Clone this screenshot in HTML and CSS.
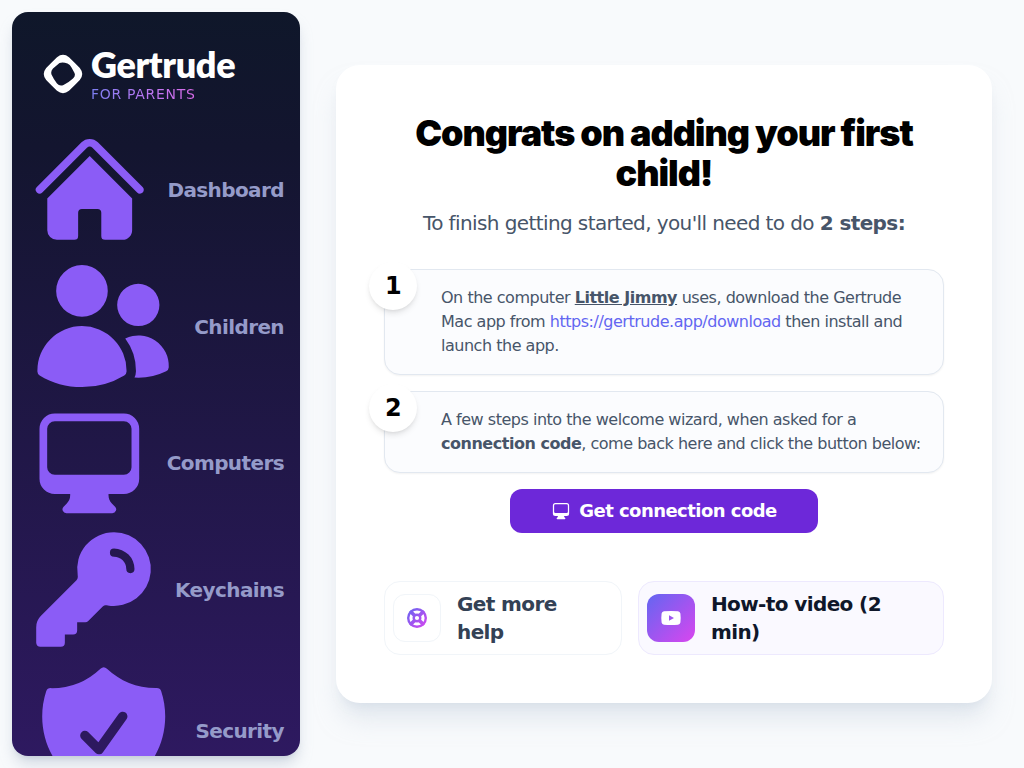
FILE: index.html
```html
<!DOCTYPE html>
<html lang="en">
<head>
<meta charset="utf-8">
<title>Gertrude for Parents</title>
<link rel="stylesheet" href="styles.css">
</head>
<body>
<div class="app">
  <aside class="sidebar">
    <div class="brand">
      <svg class="brand-mark" viewBox="0 0 40 40" aria-hidden="true">
        <path fill="#fff" fill-rule="evenodd" d="M14 3.200Q20 -1.700 26 3.200Q31.500 8.500 36.800 14Q41.700 20 36.800 26Q31.500 31.500 26 36.800Q20 41.700 14 36.800Q8.500 31.500 3.200 26Q-1.700 20 3.200 14Q8.500 8.500 14 3.200ZM16.500 9Q20 8 24.500 9.500Q27 10.500 28.500 13.500L31.500 19Q32.800 22 30 24.500Q25 29 20.500 31Q16.500 32.500 14 29.500Q10.500 25 8.500 20.500Q7.500 17 10 14.500Z"/>
      </svg>
      <div class="brand-text">
        <span class="brand-name">Gertrude</span>
        <span class="brand-tag">FOR PARENTS</span>
      </div>
    </div>
    <nav class="nav">
      <a class="nav-item" href="#"><svg viewBox="0 0 24 24" aria-hidden="true"><path d="M11.47 3.84a.75.75 0 011.06 0l8.69 8.69a.75.75 0 101.06-1.06l-8.689-8.69a2.25 2.25 0 00-3.182 0l-8.69 8.69a.75.75 0 001.061 1.06l8.69-8.69z"/><path d="M12 5.432l8.159 8.159c.03.03.06.058.091.086v6.198c0 1.035-.84 1.875-1.875 1.875H15a.75.75 0 01-.75-.75v-4.5a.75.75 0 00-.75-.75h-3a.75.75 0 00-.75.75V21a.75.75 0 01-.75.75H5.625a1.875 1.875 0 01-1.875-1.875v-6.198a2.29 2.29 0 00.091-.086L12 5.432z"/></svg><span>Dashboard</span></a>
      <a class="nav-item" href="#"><svg viewBox="0 0 24 24" aria-hidden="true"><path d="M4.5 6.375a4.125 4.125 0 118.25 0 4.125 4.125 0 01-8.25 0zM14.25 8.625a3.375 3.375 0 116.75 0 3.375 3.375 0 01-6.75 0zM1.5 19.125a7.125 7.125 0 0114.25 0v.003l-.001.119a.75.75 0 01-.363.63 13.067 13.067 0 01-6.761 1.873c-2.472 0-4.786-.684-6.76-1.873a.75.75 0 01-.364-.63l-.001-.122zM17.25 19.128l-.001.144a2.25 2.25 0 01-.233.96 10.088 10.088 0 005.06-1.01.75.75 0 00.42-.643 4.875 4.875 0 00-6.957-4.611 8.586 8.586 0 011.71 5.157v.003z"/></svg><span>Children</span></a>
      <a class="nav-item" href="#"><svg viewBox="0 0 24 24" aria-hidden="true"><path fill-rule="evenodd" d="M2.25 5.25a3 3 0 013-3h13.5a3 3 0 013 3V15a3 3 0 01-3 3h-3v.257c0 .597.237 1.17.659 1.591l.621.622a.75.75 0 01-.53 1.28h-9a.75.75 0 01-.53-1.28l.621-.622a2.25 2.25 0 00.659-1.59V18h-3a3 3 0 01-3-3V5.25zm1.5 0v7.5a1.5 1.5 0 001.5 1.5h13.5a1.5 1.5 0 001.5-1.5v-7.5a1.5 1.5 0 00-1.500-1.500H5.250a1.500 1.500 0 00-1.500 1.500z"/></svg><span>Computers</span></a>
      <a class="nav-item" href="#"><svg viewBox="0 0 24 24" aria-hidden="true"><path fill-rule="evenodd" d="M15.75 1.5a6.75 6.75 0 00-6.651 7.906c.067.39-.032.717-.221.906l-6.5 6.499a3 3 0 00-.878 2.121v2.818c0 .414.336.75.75.75H6a.75.75 0 00.75-.75v-1.5h1.5A.75.75 0 009 19.5V18h1.5a.75.75 0 00.53-.22l2.658-2.658c.19-.189.517-.288.906-.22A6.75 6.75 0 1015.75 1.5zm0 3a.75.75 0 000 1.5A2.25 2.25 0 0118 8.25a.75.75 0 001.5 0 3.75 3.75 0 00-3.75-3.75z"/></svg><span>Keychains</span></a>
      <a class="nav-item" href="#"><svg viewBox="0 0 24 24" aria-hidden="true"><path fill-rule="evenodd" d="M12.516 2.17a.75.75 0 00-1.032 0 11.209 11.209 0 01-7.877 3.08.75.75 0 00-.722.515A12.74 12.74 0 002.25 9.75c0 5.942 4.064 10.933 9.563 12.348a.749.749 0 00.374 0c5.499-1.415 9.563-6.406 9.563-12.348 0-1.39-.223-2.73-.635-3.985a.75.75 0 00-.722-.516l-.143.001c-2.996 0-5.717-1.17-7.734-3.08zm3.094 8.016a.75.75 0 10-1.22-.872l-3.236 4.53L9.53 12.22a.75.75 0 00-1.06 1.06l2.25 2.25a.75.75 0 001.14-.094l3.75-5.25z"/></svg><span>Security</span></a>
    </nav>
  </aside>
  <main class="main">
    <section class="card">
      <h1 class="title">Congrats on adding your first child!</h1>
      <p class="lead">To finish getting started, you'll need to do <strong>2 steps:</strong></p>
      <ol class="steps">
        <li class="step"><span class="step-number">1</span><p>On the computer <strong class="child-name">Little Jimmy</strong> uses, download the Gertrude Mac app from <a class="link" href="#">https://gertrude.app/download</a> then install and launch the app.</p></li>
        <li class="step"><span class="step-number">2</span><p>A few steps into the welcome wizard, when asked for a <strong>connection code</strong>, come back here and click the button below:</p></li>
      </ol>
      <button class="primary" type="button">
        <svg viewBox="0 0 24 24" aria-hidden="true"><path fill-rule="evenodd" d="M2.25 5.25a3 3 0 013-3h13.5a3 3 0 013 3V15a3 3 0 01-3 3h-3v.257c0 .597.237 1.17.659 1.591l.621.622a.75.75 0 01-.53 1.28h-9a.75.75 0 01-.53-1.28l.621-.622a2.25 2.25 0 00.659-1.59V18h-3a3 3 0 01-3-3V5.25zm1.5 0v7.5a1.5 1.5 0 001.5 1.5h13.5a1.5 1.5 0 001.5-1.5v-7.5a1.5 1.5 0 00-1.500-1.500H5.250a1.500 1.500 0 00-1.500 1.500z"/></svg>
        Get connection code
      </button>
      <div class="actions">
        <a class="action" href="#">
          <span class="tile">
            <svg viewBox="0 0 20 20" aria-hidden="true" fill="none" stroke="url(#ring)" stroke-width="2.400">
              <defs><linearGradient id="ring" x1="0" y1="0" x2="20" y2="20" gradientUnits="userSpaceOnUse"><stop stop-color="#6366f1"/><stop offset="1" stop-color="#d946ef"/></linearGradient></defs>
              <circle cx="10" cy="10" r="8.800"/><circle cx="10" cy="10" r="3.300"/>
              <path stroke-width="3.600" d="M3 3L7.600 7.600M17 3L12.400 7.600M3 17L7.600 12.400M17 17L12.400 12.400"/>
            </svg>
          </span>
          <span class="action-label">Get more help</span>
        </a>
        <a class="action action-video" href="#">
          <span class="tile">
            <svg viewBox="0 0 20 20" aria-hidden="true"><path fill="#fff" fill-rule="evenodd" d="M3 3.300Q10 2.700 17 3.300Q19 3.500 19.400 5.500Q20 10 19.400 14.500Q19 16.500 17 16.700Q10 17.300 3 16.700Q1 16.500 .6 14.500Q0 10 .6 5.500Q1 3.500 3 3.300ZM8 7.200V12.800L13 10Z"/></svg>
          </span>
          <span class="action-label">How-to video (2 min)</span>
        </a>
      </div>
    </section>
  </main>
</div>
</body>
</html>
```
FILE: styles.css
```css
* { box-sizing: border-box; }

body {
  margin: 0;
  background: #f8fafc;
  color: #000;
  font-family: "DejaVu Sans", sans-serif;
  font-size: 16px;
  line-height: 24px;
}

h1, p, ol { margin: 0; padding: 0; }
a { color: inherit; text-decoration: none; }

.app { display: flex; height: 100vh; }

.sidebar {
  flex: 0 0 288px;
  margin: 12px;
  overflow: hidden;
  border-radius: 16px;
  background: linear-gradient(#0f172a, #13152f 18%, #2e1960);
  box-shadow: 0 10px 15px -3px rgba(148, 163, 184, 0.4), 0 4px 6px -4px rgba(148, 163, 184, 0.4);
}

.brand {
  display: flex;
  align-items: center;
  gap: 8px;
  padding: 32px 32px 24px 31px;
}
.brand-mark { width: 40px; height: 40px; }
.brand-text { display: flex; flex-direction: column; align-items: flex-start; }
.brand-name {
  color: #fff;
  font: 800 36px/40px Lato, sans-serif;
  letter-spacing: -0.01em;
}
.brand-tag {
  font-size: 14px;
  line-height: 20px;
  letter-spacing: 0.05em;
  color: transparent;
  background: linear-gradient(to right, #7c7ff2, #b878f4, #d96ae8);
  background-clip: text;
}

.nav-item {
  display: flex;
  align-items: center;
  gap: 16px;
  padding: 0 16px;
  color: #959bc9;
  font-size: 20px;
  line-height: 28px;
  font-weight: 700;
  letter-spacing: -0.03em;
}
.nav-item svg { flex: 1; min-width: 0; fill: #8b5cf6; }

.main {
  flex: 1;
  display: flex;
  align-items: center;
  padding: 0 32px 0 24px;
}
.card {
  flex: 1;
  display: flex;
  flex-direction: column;
  padding: 48px;
  border-radius: 24px;
  background: #fff;
  box-shadow: 0 20px 25px -5px rgba(203, 213, 225, 0.5), 0 8px 10px -6px rgba(203, 213, 225, 0.5);
}
.title {
  font: 900 36px/40px Inter, sans-serif;
  letter-spacing: -0.03em;
  text-align: center;
}
.lead {
  margin-top: 16px;
  color: #475569;
  font-size: 20px;
  line-height: 28px;
  letter-spacing: -0.03em;
  text-align: center;
}
.steps {
  display: flex;
  flex-direction: column;
  gap: 16px;
  margin-top: 32px;
  list-style: none;
}
.step {
  position: relative;
  padding: 16px 16px 16px 56px;
  border: 1px solid #e2e8f0;
  border-radius: 16px;
  background: #fbfcfe;
  box-shadow: 0 1px 2px rgba(0, 0, 0, 0.05);
  color: #475569;
  letter-spacing: -0.03em;
}
.step-number {
  position: absolute;
  top: -8px;
  left: -16px;
  width: 48px;
  height: 48px;
  border-radius: 50%;
  background: #fff;
  box-shadow: 0 4px 6px -1px rgba(0, 0, 0, 0.1), 0 2px 4px -2px rgba(0, 0, 0, 0.1);
  color: #000;
  font-size: 24px;
  line-height: 48px;
  font-weight: 700;
  text-align: center;
}
.child-name { text-decoration: underline; }
.link { color: #6366f1; }

.primary {
  display: flex;
  align-items: center;
  justify-content: center;
  gap: 8px;
  align-self: center;
  width: 55%;
  height: 44px;
  margin-top: 16px;
  border: 0;
  border-radius: 12px;
  background: #6d28d9;
  color: #fff;
  font: 700 18px/28px "DejaVu Sans", sans-serif;
  letter-spacing: -0.03em;
}
.primary svg { width: 20px; height: 20px; fill: #fff; }

.actions { display: flex; gap: 16px; margin-top: 48px; }
.action {
  flex: 1 1 auto;
  display: flex;
  align-items: center;
  gap: 16px;
  padding: 8px 24px 8px 8px;
  border: 1px solid #f1f5f9;
  border-radius: 16px;
  color: #334155;
  font-size: 20px;
  line-height: 28px;
  font-weight: 700;
  letter-spacing: -0.03em;
}
.action-video { border-color: #ede9fe; background: #faf9ff; color: #0f172a; }
.tile {
  flex: 0 0 48px;
  height: 48px;
  display: flex;
  align-items: center;
  justify-content: center;
  border: 1px solid #f1f5f9;
  border-radius: 12px;
}
.action-video .tile { border: 0; background: linear-gradient(to bottom right, #6366f1, #d946ef); }
.tile svg { width: 20px; height: 20px; }
```
